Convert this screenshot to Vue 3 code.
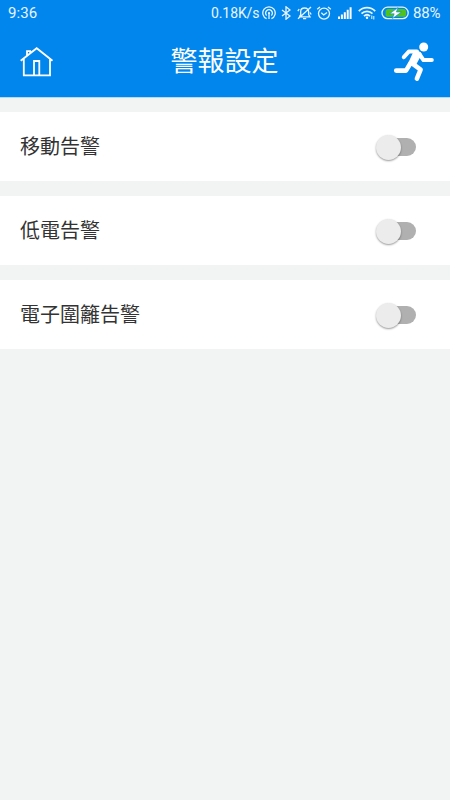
<script setup>
import { ref } from 'vue';

const alarms = ref([
  { id: 'move', label: '移動告警', on: false },
  { id: 'battery', label: '低電告警', on: false },
  { id: 'fence', label: '電子圍籬告警', on: false },
]);

function toggle(alarm) {
  alarm.on = !alarm.on;
}
</script>

<template>
  <div class="page">
    <header class="header">
      <div class="statusbar">
        <span class="time">9:36</span>
        <span class="speed">0.18K/s</span>
        <!-- hotspot -->
        <svg class="hotspot" width="14" height="14" viewBox="0 0 14 14">
          <path d="M4.6 12.7A6.2 6.2 0 1 1 9.4 12.7M4.7 9.6A3.4 3.4 0 1 1 9.3 9.6" />
          <path d="M7 7V13" />
          <circle cx="7" cy="7" r="1" class="solid" />
        </svg>
        <!-- bluetooth -->
        <svg class="bluetooth" width="10" height="14" viewBox="0 0 10 14">
          <path d="M1 4L9 10L5 13.2V0.8L9 4L1 10" />
        </svg>
        <!-- muted bell -->
        <svg class="bell" width="15" height="14" viewBox="0 0 15 14">
          <path d="M2.5 10.8H13L11.6 8.5V5.5C11.6 3.2 10 2 7.6 2S3.7 3.4 3.7 5.5V8.5L2.3 10.8M6 12.6H9.2M1 12.8L14 1M.8 5.2L2.2 3.2M14.2 8.5L13 6.5" />
        </svg>
        <!-- alarm clock -->
        <svg class="clock" width="16" height="14" viewBox="0 0 16 14">
          <circle cx="8" cy="7.6" r="5.5" />
          <path d="M1.2 3.3L4 1M14.8 3.3L12 1M5.3 6.8L7.7 9L11 6.4" />
        </svg>
        <!-- signal -->
        <svg class="signal" width="14" height="12" viewBox="0 0 14 12">
          <path class="solid" d="M0 9.5h2v2.5H0zM2.9 7.6h2V12h-2zM5.8 5.2h2V12h-2zM8.7 2.8h2V12h-2zM11.6 .3h2V12h-2z" />
        </svg>
        <!-- wifi -->
        <svg class="wifi" width="18" height="14" viewBox="0 0 18 14">
          <path class="waves" d="M.8 5.1C5.2 .4 12.8 .4 17.2 5.1M3.5 7.7C6.5 4.6 11.5 4.6 14.5 7.7M6 10.1C7.8 8.4 10.2 8.4 12 10.1" />
          <circle cx="9" cy="11.8" r="1.2" class="solid" />
          <path class="arrows" d="M13.8 9.5V13M15.8 10V13.5" />
        </svg>
        <!-- battery -->
        <svg class="battery" width="28" height="14" viewBox="0 0 28 14">
          <rect x="1" y="1.2" width="26.2" height="11.4" rx="5.7" />
          <rect class="charge" x="4.6" y="3" width="20.4" height="7.8" rx="2.6" />
          <path class="bolt" d="M17 1.6L8.6 7.8H13.2L11.4 12.6L20.4 6H15.4Z" />
        </svg>
        <span class="percent">88%</span>
      </div>

      <div class="navbar">
        <button class="navknap" aria-label="home">
          <svg class="home" width="34" height="30" viewBox="0 0 34 30">
            <path d="M.7 13.8L16.7 1.2L32.5 13.8M3.8 11.5V28.3H30V11.5M7 9V4.2H10.2V6.5M14 28V14H19.3V28" />
          </svg>
        </button>
        <h1 class="title">警報設定</h1>
        <button class="navknap" aria-label="run">
          <svg class="runner" width="42" height="40" viewBox="0 0 42 40">
            <circle cx="30.7" cy="5" r="4.5" class="solid" />
            <path class="arms" d="M10.8 15.2L15.8 9.6L24 9.6M26 11.5L30.5 18.1H38.8" />
            <path class="torso" d="M21.8 10.6L26.8 12.2L21.6 22L17.2 20.8Z" />
            <path class="legs" d="M17.3 21.5L13 28.6H3.2M19.8 21.8L27.6 27.7L23.9 36.6" />
          </svg>
        </button>
      </div>
    </header>

    <main class="list">
      <div v-for="alarm in alarms" :key="alarm.id" class="row">
        <span class="label">{{ alarm.label }}</span>
        <button
          class="switch"
          :class="{ on: alarm.on }"
          role="switch"
          :aria-checked="alarm.on"
          :aria-label="alarm.label"
          @click="toggle(alarm)"
        >
          <span class="thumb"></span>
        </button>
      </div>
    </main>
  </div>
</template>

<style>
body {
  margin: 0;
  background-color: #f2f4f4;
}
</style>

<style scoped>
.page {
  min-height: 100vh;
  background-color: #f2f4f4;
  font-family: "Noto Sans", "Noto Sans CJK TC", sans-serif;
}

.header {
  height: 97px;
  background-color: #0086ed;
  border-bottom: 1px solid #b5daf7;
  color: #fff;
}

.header svg {
  display: block;
  flex: none;
  fill: none;
  stroke: #e9f5ff;
  stroke-width: 1.3;
}

.header .solid {
  fill: #fff;
  stroke: none;
}

/* Status bar */
.statusbar {
  display: flex;
  align-items: center;
  height: 26px;
  padding-left: 8px;
  font-family: Roboto, sans-serif;
  font-size: 14px;
  line-height: 26px;
  white-space: nowrap;
  color: #e9f5ff;
}

.time {
  width: 203px;
  font-size: 15px;
  letter-spacing: 0.1px;
}

.speed {
  width: 51px;
  letter-spacing: -0.1px;
}

.bluetooth {
  margin-left: 5px;
}

.bell {
  margin-left: 6px;
}

.clock {
  margin-left: 4px;
}

.signal {
  margin-left: 6px;
}

.wifi {
  margin-left: 6px;
}

.wifi .waves {
  stroke-width: 1.8;
}

.wifi .arrows {
  stroke-width: 1;
}

.battery {
  margin-left: 5px;
}

.battery .charge {
  fill: #4fc21c;
  stroke: none;
}

.battery .bolt {
  fill: #fff;
  stroke: #0086ed;
  stroke-width: 0.6;
}

.percent {
  margin-left: 4px;
  font-size: 15px;
  letter-spacing: -0.2px;
}

/* Title bar */
.navbar {
  display: flex;
  justify-content: space-between;
  align-items: center;
  height: 71px;
  padding: 0 15px 0 20px;
}

.navknap {
  display: flex;
  width: 42px;
  padding: 0;
  border: none;
  background: none;
  cursor: pointer;
}

.navknap:first-child {
  width: 36px;
}

.header .home {
  stroke: #fff;
  stroke-width: 1.8;
}

.header .runner {
  stroke: #fff;
  stroke-linecap: round;
  stroke-linejoin: round;
}

.runner .arms {
  stroke-width: 4;
}

.runner .torso {
  fill: #fff;
  stroke-width: 3.4;
}

.runner .legs {
  stroke-width: 4.6;
}

.title {
  margin: 0 0 2px;
  font-size: 27px;
  font-weight: 400;
  line-height: 40px;
}

/* Alarm rows */
.list {
  display: flex;
  flex-direction: column;
  gap: 15px;
  padding-top: 14px;
}

.row {
  display: flex;
  justify-content: space-between;
  align-items: center;
  height: 69px;
  padding: 0 34px 0 20px;
  background-color: #fff;
}

.label {
  font-size: 20px;
  line-height: 30px;
  color: #333;
}

.switch {
  display: flex;
  align-items: center;
  width: 36px;
  height: 18px;
  margin-top: 1px;
  padding: 0;
  border: none;
  border-radius: 9px;
  background-color: #b0b0b0;
  cursor: pointer;
}

.thumb {
  flex: none;
  width: 25px;
  height: 25px;
  margin-left: -4px;
  border-radius: 50%;
  background-color: #ececec;
  box-shadow: 0 1px 2px rgba(0, 0, 0, 0.4);
}

.switch.on {
  background-color: #80c3f6;
}

.switch.on .thumb {
  margin-left: 15px;
  background-color: #0086ed;
}
</style>
